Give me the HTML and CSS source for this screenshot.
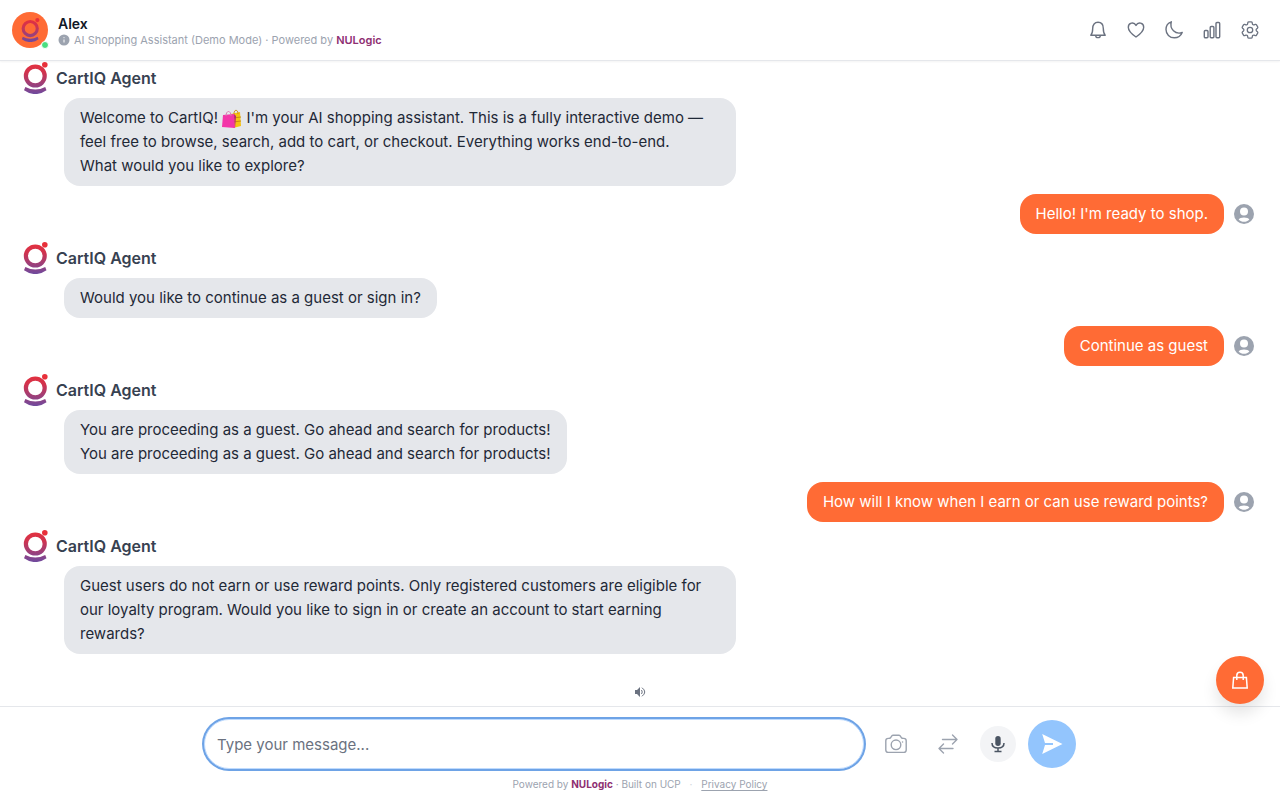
FILE: index.html
```html
<!DOCTYPE html>
<html lang="en">
<head>
  <meta charset="UTF-8">
  <title>CartIQ</title>
  <meta name="viewport" content="width=device-width, initial-scale=1.0">
  <link rel="stylesheet" href="styles.css">
</head>
<body>

  <!-- Shared shapes -->
  <svg class="defs" width="0" height="0" aria-hidden="true">
    <defs>
      <linearGradient id="brand" gradientUnits="userSpaceOnUse" x1="0" y1="0" x2="0" y2="32">
        <stop offset="0" stop-color="#e8303a"></stop>
        <stop offset="0.35" stop-color="#cf3350"></stop>
        <stop offset="1" stop-color="#6f4a9e"></stop>
      </linearGradient>
    </defs>
    <symbol id="logo" viewBox="0 0 32 32">
      <circle cx="15.300" cy="14" r="9.400" fill="none" stroke="url(#brand)" stroke-width="4.200"></circle>
      <circle cx="24.800" cy="2.800" r="2.800" fill="#e8303a"></circle>
      <path d="M5.400 25Q15.300 30 25.200 25L26.500 28.200Q15.300 36 4 28.200Z" fill="url(#brand)"></path>
    </symbol>
    <symbol id="user" viewBox="0 0 20 20">
      <circle cx="10" cy="10" r="10" fill="#9ca3af"></circle>
      <circle cx="10" cy="7.500" r="4" fill="#fff"></circle>
      <path d="M4.600 15.500C5.500 12.800 14.500 12.800 15.400 15.500C12.500 18.600 7.500 18.600 4.600 15.500Z" fill="#fff"></path>
    </symbol>
  </svg>

  <header class="header">
    <div class="avatar">
      <svg width="20" height="24" viewBox="2 0 26 32"><use href="#logo" width="32" height="32"></use></svg>
      <span class="online"></span>
    </div>
    <div class="title">
      <h1>Alex</h1>
      <p>
        <svg width="12" height="12" viewBox="0 0 12 12"><circle cx="6" cy="6" r="5.500" fill="#9ca3af"></circle><path d="M6 5.500v3M6 3.200v1" stroke="#fff"></path></svg>
        <span>AI Shopping Assistant (Demo Mode) · Powered by <a href="#">NULogic</a></span>
      </p>
    </div>
    <nav class="actions">
      <button type="button" aria-label="Notifications">
        <svg class="icon" viewBox="0 0 20 20"><path d="M2.800 15.200C4.500 13.400 4.700 11.500 4.700 8.500C4.700 4.700 6.600 2.300 10 2.300S15.300 4.700 15.300 8.500C15.300 11.500 15.500 13.400 17.200 15.200ZM7.700 15.400C7.700 18.400 12.300 18.400 12.300 15.400"></path></svg>
      </button>
      <button type="button" aria-label="Wishlist">
        <svg class="icon" viewBox="0 0 20 20"><path d="M10 17C6.500 14.600 2.300 11.300 2.300 7.200C2.300 2.600 8 1.500 10 5.400C12 1.500 17.700 2.600 17.700 7.200C17.700 11.300 13.500 14.600 10 17Z"></path></svg>
      </button>
      <button type="button" aria-label="Dark mode">
        <svg class="icon" viewBox="0 0 20 20"><path d="M7.300 1.800C3.900 3 2 6 2 9.500C2 14.200 5.700 17.800 10.300 17.800C13.800 17.800 16.900 15.800 18.200 12.500C11.400 14.800 5.300 9.200 7.300 1.800Z"></path></svg>
      </button>
      <button type="button" aria-label="Statistics">
        <svg class="icon" viewBox="0 0 20 20"><rect x="2.300" y="10.500" width="3.700" height="7.200" rx="1"></rect><rect x="8.200" y="6.500" width="3.700" height="11.200" rx="1"></rect><rect x="14" y="2.500" width="3.700" height="15.200" rx="1"></rect></svg>
      </button>
      <button type="button" aria-label="Settings">
        <svg class="icon" viewBox="1 1 22 22"><path d="M9.594 3.940c.09-.542.56-.94 1.110-.94h2.593c.55 0 1.020.398 1.110.94l.213 1.281c.063.374.313.686.645.87.074.04.147.083.22.127.325.196.72.257 1.075.124l1.217-.456a1.125 1.125 0 0 1 1.370.49l1.296 2.247a1.125 1.125 0 0 1-.26 1.431l-1.003.827c-.293.241-.438.613-.43.992a7.723 7.723 0 0 1 0 .255c-.008.378.137.75.43.991l1.004.827c.424.35.534.955.26 1.430l-1.298 2.247a1.125 1.125 0 0 1-1.369.491l-1.217-.456c-.355-.133-.75-.072-1.076.124a6.470 6.470 0 0 1-.22.128c-.331.183-.581.495-.644.869l-.213 1.281c-.09.543-.56.94-1.110.94h-2.594c-.55 0-1.019-.398-1.110-.94l-.213-1.281c-.062-.374-.312-.686-.644-.870a6.520 6.520 0 0 1-.22-.127c-.325-.196-.72-.257-1.076-.124l-1.217.456a1.125 1.125 0 0 1-1.369-.49l-1.297-2.247a1.125 1.125 0 0 1 .26-1.431l1.004-.827c.292-.240.437-.613.430-.991a6.932 6.932 0 0 1 0-.255c.007-.380-.138-.751-.430-.992l-1.004-.827a1.125 1.125 0 0 1-.26-1.430l1.297-2.247a1.125 1.125 0 0 1 1.370-.491l1.216.456c.356.133.751.072 1.076-.124.072-.044.146-.086.220-.128.332-.183.582-.495.644-.869l.214-1.280Z"></path><circle cx="12" cy="12" r="3"></circle></svg>
      </button>
    </nav>
  </header>

  <main class="chat">
    <section class="agent">
      <h2><svg width="32" height="32"><use href="#logo"></use></svg>CartIQ Agent</h2>
      <p class="bubble">Welcome to CartIQ!
        <svg class="bags" viewBox="0 0 20 20" aria-hidden="true"><path d="M9 5l9-2 1 14-8 2z" fill="#f5c211"></path><path d="M11 9l8-1M11 13l8-1" stroke="#c98a10"></path><path d="M12 5C12 0 16 0 16 5" fill="none" stroke="#c98a10"></path><path d="M1 6l11-1 1 14-13-1z" fill="#f335a8"></path><path d="M12 5l2 2-1 12z" fill="#b51f78"></path><path d="M4 7C4 1 9 1 9 7" fill="none" stroke="#d879b0"></path></svg>
        I'm your AI shopping assistant. This is a fully interactive demo — feel free to browse, search, add to cart, or checkout. Everything works end-to-end.<br>What would you like to explore?</p>
    </section>

    <section class="customer">
      <p class="bubble">Hello! I'm ready to shop.</p>
      <svg width="20" height="20"><use href="#user"></use></svg>
    </section>

    <section class="agent">
      <h2><svg width="32" height="32"><use href="#logo"></use></svg>CartIQ Agent</h2>
      <p class="bubble">Would you like to continue as a guest or sign in?</p>
    </section>

    <section class="customer">
      <p class="bubble">Continue as guest</p>
      <svg width="20" height="20"><use href="#user"></use></svg>
    </section>

    <section class="agent">
      <h2><svg width="32" height="32"><use href="#logo"></use></svg>CartIQ Agent</h2>
      <p class="bubble">You are proceeding as a guest. Go ahead and search for products!<br>You are proceeding as a guest. Go ahead and search for products!</p>
    </section>

    <section class="customer">
      <p class="bubble">How will I know when I earn or can use reward points?</p>
      <svg width="20" height="20"><use href="#user"></use></svg>
    </section>

    <section class="agent">
      <h2><svg width="32" height="32"><use href="#logo"></use></svg>CartIQ Agent</h2>
      <p class="bubble">Guest users do not earn or use reward points. Only registered customers are eligible for our loyalty program. Would you like to sign in or create an account to start earning rewards?</p>
    </section>
  </main>

  <div class="sound">
    <button type="button" aria-label="Read aloud">
      <svg width="12" height="12" viewBox="0 0 12 12"><path d="M1 4h2l3-3v10L3 8H1z" fill="#6b7280"></path><path d="M7.500 4Q9 6 7.500 8M8 1.700Q13.500 6 8 10.300" fill="none" stroke="#6b7280"></path></svg>
    </button>
  </div>

  <footer class="footer">
    <form class="composer">
      <input type="text" aria-label="Message" placeholder="Type your message...">
      <button type="button" class="tool" aria-label="Send a photo">
        <svg class="icon" viewBox="0 0 24 24"><path d="M6.500 5.800L7.800 3.900Q8.300 3.200 9.200 3.200H14.800Q15.700 3.200 16.200 3.900L17.500 5.800Q18 6.400 19 6.400H19.800Q22.200 6.400 22.200 8.800V18Q22.200 20.400 19.800 20.400H4.200Q1.800 20.400 1.800 18V8.800Q1.800 6.400 4.200 6.400H5Q6 6.400 6.500 5.800Z"></path><circle cx="12" cy="12.800" r="4.800"></circle><path d="M18.500 10h.1"></path></svg>
      </button>
      <button type="button" class="tool" aria-label="Switch mode">
        <svg class="icon" viewBox="0 0 24 24"><path d="M6.500 7.500H21M16.500 3L21 7.500L16.500 12M17 16.500H3M7.500 12L3 16.500L7.500 21"></path></svg>
      </button>
      <button type="button" class="mic" aria-label="Voice input">
        <svg width="20" height="20" viewBox="0 0 20 20"><rect x="7.300" y="2" width="5.400" height="10" rx="2.700" fill="#4b5563"></rect><path d="M4 9Q4 14 10 14Q16 14 16 9M10 14V17.500M6.500 17.500H13.500" fill="none" stroke="#4b5563" stroke-width="1.500"></path></svg>
      </button>
      <button type="submit" class="send" aria-label="Send">
        <svg width="24" height="24" viewBox="0 0 24 24"><path d="M2.200 2L22.500 12L2.200 22L5 13H13V11H5Z" fill="#fff"></path></svg>
      </button>
    </form>
    <p class="credits">Powered by <a href="#" class="brand">NULogic</a> · Built on UCP <span class="dot">·</span> <a href="#" class="privacy">Privacy Policy</a></p>
  </footer>

  <button type="button" class="cart" aria-label="Open cart">
    <svg width="20" height="20" viewBox="0 0 20 20" fill="none" stroke="#fff" stroke-width="1.500"><path d="M3.600 7.500H16.400L17.200 18H2.800ZM6.800 10V5.500C6.800 1.300 13.200 1.300 13.200 5.500V10"></path></svg>
  </button>

</body>
</html>
```
FILE: styles.css
```css
* {
  box-sizing: border-box;
}

body {
  margin: 0;
  height: 100vh;
  display: flex;
  flex-direction: column;
  font-family: Inter, "Liberation Sans", sans-serif;
  font-size: 15px;
  line-height: 24px;
  color: #1f2937;
  background-color: #fff;
}

h1, h2, p {
  margin: 0;
}

button {
  display: flex;
  align-items: center;
  justify-content: center;
  padding: 0;
  border: none;
  background: none;
  cursor: pointer;
}

.defs {
  position: absolute;
}

.icon {
  width: 20px;
  height: 20px;
  fill: none;
  stroke: #6b7280;
  stroke-width: 1.4;
  stroke-linecap: round;
  stroke-linejoin: round;
}

/* Header */
.header {
  display: flex;
  align-items: center;
  padding: 12px;
  border-bottom: 1px solid #e5e7eb;
  box-shadow: 0 1px 2px rgba(0, 0, 0, 0.05);
}

.avatar {
  position: relative;
  display: flex;
  align-items: center;
  justify-content: center;
  width: 36px;
  height: 36px;
  border-radius: 50%;
  background-color: #ff6b35;
}

.online {
  position: absolute;
  right: -1px;
  bottom: -1px;
  width: 8px;
  height: 8px;
  border: 1px solid #fff;
  border-radius: 50%;
  background-color: #4ade80;
}

.title {
  flex: 1;
  margin-left: 10px;
}

.title h1 {
  font-size: 14px;
  line-height: 20px;
  font-weight: 600;
  color: #111827;
}

.title p {
  display: flex;
  align-items: center;
  gap: 4px;
  font-size: 11px;
  line-height: 12px;
  color: #9ca3af;
}

.title a {
  font-weight: 600;
  color: #8e2f72;
  text-decoration: none;
}

.actions {
  display: flex;
  gap: 2px;
}

.actions button {
  width: 36px;
  height: 36px;
}

/* Messages */
.chat {
  flex: 1;
  display: flex;
  flex-direction: column;
  gap: 8px;
  padding: 1px 26px 0 20px;
  min-height: 0;
}

.agent h2 {
  display: flex;
  align-items: center;
  gap: 4px;
  margin-bottom: 4px;
  font-size: 16px;
  line-height: 24px;
  font-weight: 600;
  color: #374151;
}

.bubble {
  width: fit-content;
  max-width: 672px;
  padding: 8px 16px;
  border-radius: 16px;
}

.agent .bubble {
  margin-left: 44px;
  background-color: #e5e7eb;
}

.bags {
  width: 20px;
  height: 20px;
  vertical-align: middle;
}

.customer {
  display: flex;
  align-items: center;
  justify-content: flex-end;
  gap: 10px;
}

.customer .bubble {
  color: #fff;
  background-color: #ff6b35;
}

.sound {
  display: flex;
  justify-content: center;
  padding: 8px;
}

/* Composer */
.footer {
  padding: 12px 16px 9px;
  border-top: 1px solid #e5e7eb;
}

.composer {
  display: flex;
  align-items: center;
  gap: 12px;
  max-width: 872px;
  margin: 0 auto;
}

.composer input {
  flex: 1;
  min-width: 0;
  height: 50px;
  padding: 0 12px;
  border: 1px solid #bfdbfe;
  border-radius: 25px;
  outline: none;
  box-shadow: 0 0 0 2px #6ea3e6;
  font: inherit;
}

.composer input::placeholder {
  color: #6b7280;
}

.tool {
  width: 40px;
  height: 40px;
}

.tool .icon {
  width: 24px;
  height: 24px;
  stroke: #9ca3af;
}

.mic {
  width: 36px;
  height: 36px;
  border-radius: 50%;
  background-color: #f3f4f6;
}

.send {
  width: 48px;
  height: 48px;
  border-radius: 50%;
  background-color: #93c5fd;
}

.credits {
  margin-top: 8px;
  font-size: 10px;
  line-height: 14px;
  text-align: center;
  color: #9ca3af;
}

.credits .brand {
  font-weight: 700;
  color: #8e2f72;
  text-decoration: none;
}

.credits .dot {
  margin: 0 6px;
  color: #d1d5db;
}

.credits .privacy {
  color: inherit;
  text-underline-offset: 2px;
}

/* Floating cart */
.cart {
  position: fixed;
  right: 16px;
  bottom: 96px;
  width: 48px;
  height: 48px;
  border-radius: 50%;
  background-color: #ff6b35;
  box-shadow: 0 10px 15px rgba(0, 0, 0, 0.1);
}
```
